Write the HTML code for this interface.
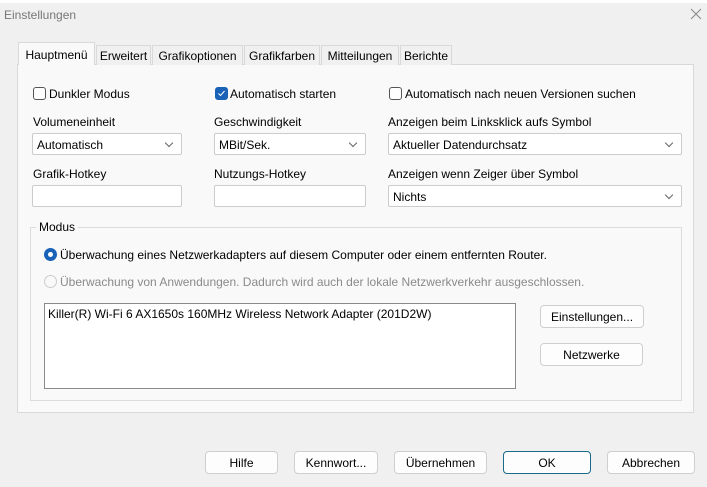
<!DOCTYPE html>
<html><head><meta charset="utf-8"><style>
*{box-sizing:border-box;margin:0;padding:0}
body{width:707px;height:487px;background:#f0f0f0;font-family:"Liberation Sans",sans-serif;font-size:12px;color:#000;position:relative;overflow:hidden}
.a{position:absolute;white-space:nowrap}
.tab{position:absolute;top:45px;height:20px;border:1px solid #d9d9d9;border-bottom:none;background:#f0f0f0;padding:3px 0 0;text-align:center}
.cb{position:absolute;width:13px;height:13px;border:1px solid #555;border-radius:3px;background:#fff}
.combo,.inp{position:absolute;height:22px;border:1px solid #ccc;border-radius:2px;background:#fff;padding:4px 0 0 4px}
.combo:after{content:"";position:absolute;right:9px;top:6px;width:5px;height:5px;border-right:1px solid #666;border-bottom:1px solid #666;transform:rotate(45deg)}
.btn{position:absolute;height:23px;border:1px solid #cfcfcf;border-radius:4px;background:#fdfdfd;text-align:center;padding-top:4px}
</style></head><body>
<div class="a" style="left:0;top:0;width:707px;height:3px;background:#fff"></div>
<div class="a" style="left:4px;top:8px;color:#777;font-size:12px">Einstellungen</div>
<svg class="a" style="left:690px;top:8px" width="12" height="12"><path d="M1 1L11 11M11 1L1 11" stroke="#888" stroke-width="1"/></svg>
<div class="a" style="left:17px;top:64px;width:677px;height:349px;border:1px solid #d9d9d9;background:#f9f9f9"></div>
<div class="tab" style="left:18px;top:42px;width:77px;height:23px;background:#f9f9f9;padding-top:5px">Hauptmenü</div>
<div class="tab" style="left:96px;width:55px">Erweitert</div>
<div class="tab" style="left:152px;width:91px">Grafikoptionen</div>
<div class="tab" style="left:244px;width:76px">Grafikfarben</div>
<div class="tab" style="left:321px;width:78px">Mitteilungen</div>
<div class="tab" style="left:400px;width:52px">Berichte</div>

<div class="cb" style="left:33px;top:87px"></div><div class="a" style="left:49px;top:87px">Dunkler Modus</div>
<div class="cb" style="left:215px;top:87px;background:#1a62b8;border-color:#1a62b8"><svg width="11" height="11" style="position:absolute;left:0;top:0"><path d="M2.5 5.5L4.5 7.5L8.5 3" stroke="#fff" fill="none"/></svg></div><div class="a" style="left:230px;top:87px">Automatisch starten</div>
<div class="cb" style="left:389px;top:87px"></div><div class="a" style="left:405px;top:87px">Automatisch nach neuen Versionen suchen</div>

<div class="a" style="left:33px;top:115px">Volumeneinheit</div>
<div class="a" style="left:214px;top:115px">Geschwindigkeit</div>
<div class="a" style="left:388px;top:115px">Anzeigen beim Linksklick aufs Symbol</div>
<div class="combo" style="left:32px;top:133px;width:150px">Automatisch</div>
<div class="combo" style="left:214px;top:133px;width:152px">MBit/Sek.</div>
<div class="combo" style="left:388px;top:133px;width:294px">Aktueller Datendurchsatz</div>

<div class="a" style="left:33px;top:167px">Grafik-Hotkey</div>
<div class="a" style="left:214px;top:167px">Nutzungs-Hotkey</div>
<div class="a" style="left:388px;top:167px">Anzeigen wenn Zeiger über Symbol</div>
<div class="inp" style="left:32px;top:185px;width:150px"></div>
<div class="inp" style="left:214px;top:185px;width:152px"></div>
<div class="combo" style="left:388px;top:185px;width:294px">Nichts</div>

<div class="a" style="left:30px;top:227px;width:652px;height:174px;border:1px solid #dcdcdc"></div>
<div class="a" style="left:36px;top:220px;background:#f9f9f9;padding:0 3px">Modus</div>
<div class="a" style="left:44px;top:248px;width:13px;height:13px;border-radius:50%;background:#1a62b8"><div style="position:absolute;left:4px;top:4px;width:5px;height:5px;border-radius:50%;background:#fff"></div></div>
<div class="a" style="left:60px;top:248px">Überwachung eines Netzwerkadapters auf diesem Computer oder einem entfernten Router.</div>
<div class="a" style="left:44px;top:275px;width:13px;height:13px;border-radius:50%;border:1px solid #ccc"></div>
<div class="a" style="left:60px;top:275px;color:#8a8a8a">Überwachung von Anwendungen. Dadurch wird auch der lokale Netzwerkverkehr ausgeschlossen.</div>
<div class="a" style="left:44px;top:303px;width:472px;height:86px;border:1px solid #8a8a8a;background:#fff;padding:3px 0 0 3px">Killer(R) Wi-Fi 6 AX1650s 160MHz Wireless Network Adapter (201D2W)</div>
<div class="btn" style="left:540px;top:305px;width:104px">Einstellungen...</div>
<div class="btn" style="left:540px;top:343px;width:103px">Netzwerke</div>

<div class="btn" style="left:205px;top:451px;width:73px">Hilfe</div>
<div class="btn" style="left:294px;top:451px;width:84px">Kennwort...</div>
<div class="btn" style="left:394px;top:451px;width:93px">Übernehmen</div>
<div class="btn" style="left:503px;top:451px;width:88px;border:1px solid #1a6a8a">OK</div>
<div class="btn" style="left:607px;top:451px;width:88px">Abbrechen</div>
</body></html>
